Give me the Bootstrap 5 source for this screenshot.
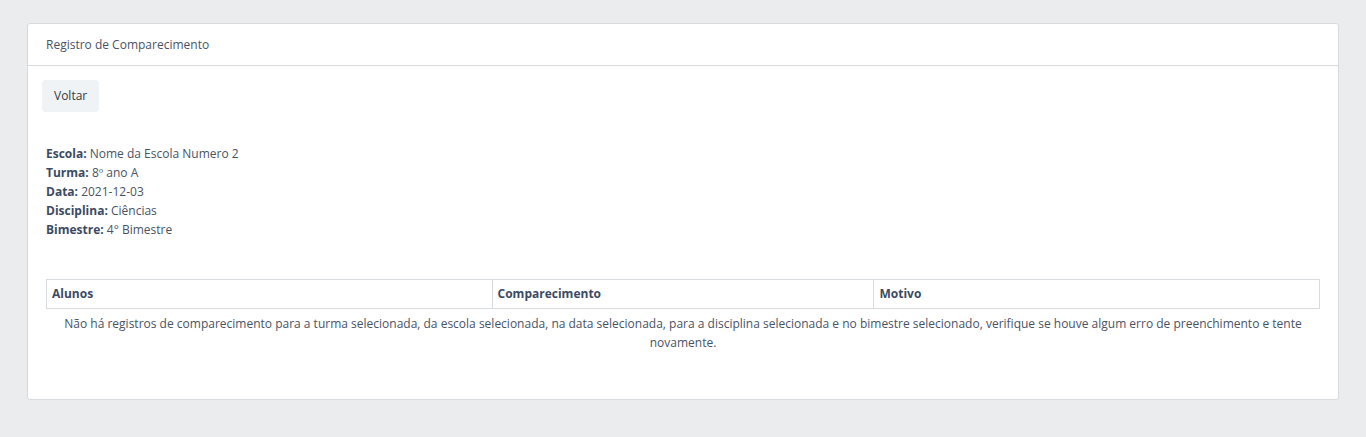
<!DOCTYPE html>
<html lang="pt-BR">
<head>
<meta charset="utf-8">
<meta name="viewport" content="width=device-width, initial-scale=1">
<title>Registro de Comparecimento</title>
<link href="https://cdn.jsdelivr.net/npm/bootstrap@5.3.0/dist/css/bootstrap.min.css" rel="stylesheet">
<style>
body { background: #ebecee; color: #3c4b64; font-family: "Open Sans", "Noto Sans", sans-serif; font-size: 12px; line-height: 19px; }
.page { padding: 23px 27px; }
.record { border: 1px solid #d8dbde; border-radius: 3px; }
.record .card-header { background: #fff; color: #4a5364; padding: 11px 18px; border-color: #d8dbde; }
.record .card-body { padding: 14px 18px 47px; }
.btn-back { background: #eff3f6; color: #343b41; font-size: 12px; line-height: 20px; padding: 6px 12px; border: 0; border-radius: 4px; margin-left: -4px; }
.details { margin: 32px 0 40px; }
.details span, .empty-note { color: #4a5364; }
.empty-note { padding-top: 5px; }
.grid-head { color: #3c4b64; table-layout: fixed; border-color: #d8dbde; margin: 0; }
.grid-head th { padding: 4px 5px 5px; }
</style>
</head>
<body>
<main class="page">
<div class="card record">
<div class="card-header">Registro de Comparecimento</div>
<div class="card-body">
<button type="button" class="btn btn-back">Voltar</button>
<div class="details">
<div><strong>Escola:</strong> <span>Nome da Escola Numero 2</span></div>
<div><strong>Turma:</strong> <span>8º ano A</span></div>
<div><strong>Data:</strong> <span>2021-12-03</span></div>
<div><strong>Disciplina:</strong> <span>Ciências</span></div>
<div><strong>Bimestre:</strong> <span>4° Bimestre</span></div>
</div>
<table class="table table-bordered grid-head">
<colgroup><col style="width:35%"><col style="width:30%"><col style="width:35%"></colgroup>
<thead><tr><th scope="col">Alunos</th><th scope="col">Comparecimento</th><th scope="col">Motivo</th></tr></thead>
</table>
<p class="text-center mb-0 empty-note">Não há registros de comparecimento para a turma selecionada, da escola selecionada, na data selecionada, para a disciplina selecionada e no bimestre selecionado, verifique se houve algum erro de preenchimento e tente novamente.</p>
</div>
</div>
</main>
<script src="https://cdn.jsdelivr.net/npm/bootstrap@5.3.0/dist/js/bootstrap.bundle.min.js"></script>
</body>
</html>
